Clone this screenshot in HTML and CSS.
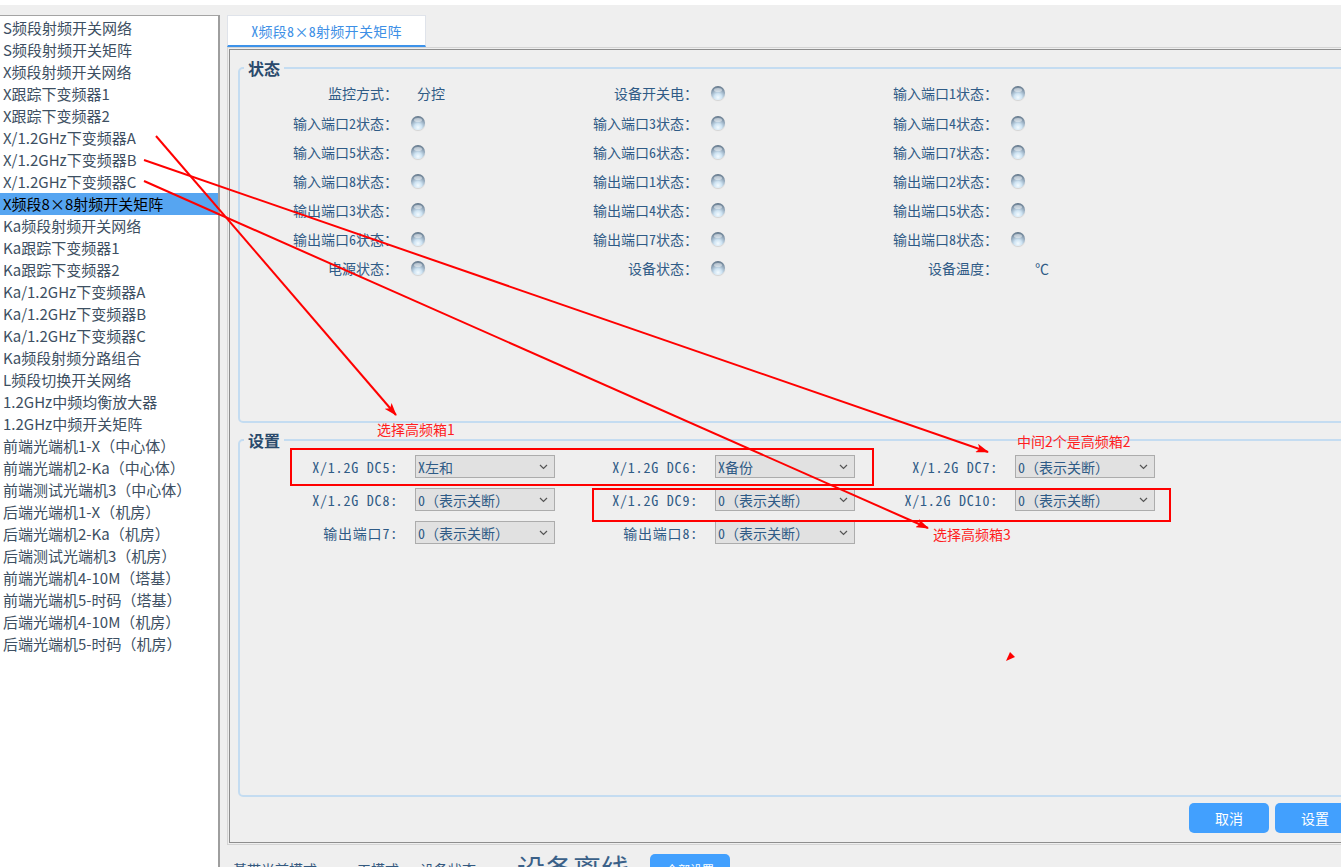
FILE: index.html
```html
<!DOCTYPE html>
<html lang="zh-CN">
<head>
<meta charset="utf-8">
<title>X频段8×8射频开关矩阵</title>
<link rel="stylesheet" href="styles.css">
</head>
<body>
<div class="topstrip"></div>
<div class="app">
  <aside class="sidebar">
    <div class="nav-item">S频段射频开关网络</div>
    <div class="nav-item">S频段射频开关矩阵</div>
    <div class="nav-item">X频段射频开关网络</div>
    <div class="nav-item">X跟踪下变频器1</div>
    <div class="nav-item">X跟踪下变频器2</div>
    <div class="nav-item">X/1.2GHz下变频器A</div>
    <div class="nav-item">X/1.2GHz下变频器B</div>
    <div class="nav-item">X/1.2GHz下变频器C</div>
    <div class="nav-item active">X频段8×8射频开关矩阵</div>
    <div class="nav-item">Ka频段射频开关网络</div>
    <div class="nav-item">Ka跟踪下变频器1</div>
    <div class="nav-item">Ka跟踪下变频器2</div>
    <div class="nav-item">Ka/1.2GHz下变频器A</div>
    <div class="nav-item">Ka/1.2GHz下变频器B</div>
    <div class="nav-item">Ka/1.2GHz下变频器C</div>
    <div class="nav-item">Ka频段射频分路组合</div>
    <div class="nav-item">L频段切换开关网络</div>
    <div class="nav-item">1.2GHz中频均衡放大器</div>
    <div class="nav-item">1.2GHz中频开关矩阵</div>
    <div class="nav-item">前端光端机1-X（中心体）</div>
    <div class="nav-item">前端光端机2-Ka（中心体）</div>
    <div class="nav-item">前端测试光端机3（中心体）</div>
    <div class="nav-item">后端光端机1-X（机房）</div>
    <div class="nav-item">后端光端机2-Ka（机房）</div>
    <div class="nav-item">后端测试光端机3（机房）</div>
    <div class="nav-item">前端光端机4-10M（塔基）</div>
    <div class="nav-item">前端光端机5-时码（塔基）</div>
    <div class="nav-item">后端光端机4-10M（机房）</div>
    <div class="nav-item">后端光端机5-时码（机房）</div>
  </aside>

  <main class="main">
    <div class="tabs">
      <div class="tab active">X频段8×8射频开关矩阵</div>
    </div>
    <div class="frame">
      <div class="panel">
        <fieldset class="group status">
          <legend>状态</legend>
          <div class="grid status-grid">
            <div class="cell"><span class="lbl">监控方式：</span><span class="val text">分控</span></div>
            <div class="cell"><span class="lbl">设备开关电：</span><span class="val"><i class="led"></i></span></div>
            <div class="cell"><span class="lbl">输入端口1状态：</span><span class="val"><i class="led"></i></span></div>

            <div class="cell"><span class="lbl">输入端口2状态：</span><span class="val"><i class="led"></i></span></div>
            <div class="cell"><span class="lbl">输入端口3状态：</span><span class="val"><i class="led"></i></span></div>
            <div class="cell"><span class="lbl">输入端口4状态：</span><span class="val"><i class="led"></i></span></div>

            <div class="cell"><span class="lbl">输入端口5状态：</span><span class="val"><i class="led"></i></span></div>
            <div class="cell"><span class="lbl">输入端口6状态：</span><span class="val"><i class="led"></i></span></div>
            <div class="cell"><span class="lbl">输入端口7状态：</span><span class="val"><i class="led"></i></span></div>

            <div class="cell"><span class="lbl">输入端口8状态：</span><span class="val"><i class="led"></i></span></div>
            <div class="cell"><span class="lbl">输出端口1状态：</span><span class="val"><i class="led"></i></span></div>
            <div class="cell"><span class="lbl">输出端口2状态：</span><span class="val"><i class="led"></i></span></div>

            <div class="cell"><span class="lbl">输出端口3状态：</span><span class="val"><i class="led"></i></span></div>
            <div class="cell"><span class="lbl">输出端口4状态：</span><span class="val"><i class="led"></i></span></div>
            <div class="cell"><span class="lbl">输出端口5状态：</span><span class="val"><i class="led"></i></span></div>

            <div class="cell"><span class="lbl">输出端口6状态：</span><span class="val"><i class="led"></i></span></div>
            <div class="cell"><span class="lbl">输出端口7状态：</span><span class="val"><i class="led"></i></span></div>
            <div class="cell"><span class="lbl">输出端口8状态：</span><span class="val"><i class="led"></i></span></div>

            <div class="cell"><span class="lbl">电源状态：</span><span class="val"><i class="led"></i></span></div>
            <div class="cell"><span class="lbl">设备状态：</span><span class="val"><i class="led"></i></span></div>
            <div class="cell"><span class="lbl">设备温度：</span><span class="val unit">℃</span></div>
          </div>
        </fieldset>

        <fieldset class="group settings">
          <legend>设置</legend>
          <div class="grid settings-grid">
            <div class="cell"><span class="lbl">X/1.2G DC5:</span><span class="val"><span class="combo"><span class="combo-text">X左和</span><svg class="chev" width="9" height="6" viewBox="0 0 9 6"><polyline points="1,1 4.5,4.5 8,1" fill="none" stroke="#555" stroke-width="1.2"/></svg></span></span></div>
            <div class="cell"><span class="lbl">X/1.2G DC6:</span><span class="val"><span class="combo"><span class="combo-text">X备份</span><svg class="chev" width="9" height="6" viewBox="0 0 9 6"><polyline points="1,1 4.5,4.5 8,1" fill="none" stroke="#555" stroke-width="1.2"/></svg></span></span></div>
            <div class="cell"><span class="lbl">X/1.2G DC7:</span><span class="val"><span class="combo"><span class="combo-text">0（表示关断）</span><svg class="chev" width="9" height="6" viewBox="0 0 9 6"><polyline points="1,1 4.5,4.5 8,1" fill="none" stroke="#555" stroke-width="1.2"/></svg></span></span></div>

            <div class="cell"><span class="lbl">X/1.2G DC8:</span><span class="val"><span class="combo"><span class="combo-text">0（表示关断）</span><svg class="chev" width="9" height="6" viewBox="0 0 9 6"><polyline points="1,1 4.5,4.5 8,1" fill="none" stroke="#555" stroke-width="1.2"/></svg></span></span></div>
            <div class="cell"><span class="lbl">X/1.2G DC9:</span><span class="val"><span class="combo"><span class="combo-text">0（表示关断）</span><svg class="chev" width="9" height="6" viewBox="0 0 9 6"><polyline points="1,1 4.5,4.5 8,1" fill="none" stroke="#555" stroke-width="1.2"/></svg></span></span></div>
            <div class="cell"><span class="lbl">X/1.2G DC10:</span><span class="val"><span class="combo"><span class="combo-text">0（表示关断）</span><svg class="chev" width="9" height="6" viewBox="0 0 9 6"><polyline points="1,1 4.5,4.5 8,1" fill="none" stroke="#555" stroke-width="1.2"/></svg></span></span></div>

            <div class="cell"><span class="lbl">输出端口7:</span><span class="val"><span class="combo"><span class="combo-text">0（表示关断）</span><svg class="chev" width="9" height="6" viewBox="0 0 9 6"><polyline points="1,1 4.5,4.5 8,1" fill="none" stroke="#555" stroke-width="1.2"/></svg></span></span></div>
            <div class="cell"><span class="lbl">输出端口8:</span><span class="val"><span class="combo"><span class="combo-text">0（表示关断）</span><svg class="chev" width="9" height="6" viewBox="0 0 9 6"><polyline points="1,1 4.5,4.5 8,1" fill="none" stroke="#555" stroke-width="1.2"/></svg></span></span></div>
          </div>
        </fieldset>

        <div class="actions">
          <button class="btn">取消</button>
          <button class="btn">设置</button>
        </div>
      </div>
    </div>

    <div class="statusbar">
      <span class="sb-text">基带光前模式</span>
      <span class="sb-text sb-mode">工模式</span>
      <span class="sb-text sb-state">设备状态</span>
      <span class="sb-big">设备离线</span>
      <button class="sb-btn">全部设置</button>
    </div>
  </main>
</div>

<div class="annot">
  <svg class="annot-svg" width="1341" height="867" viewBox="0 0 1341 867">
    <defs>
      <marker id="ah" markerWidth="13" markerHeight="9" refX="12" refY="4.5" orient="auto" markerUnits="userSpaceOnUse">
        <path d="M0,0 L13,4.5 L0,9 L3,4.5 z" fill="#ff0000"/>
      </marker>
    </defs>
    <g stroke="#ff0000" stroke-width="2" fill="none">
      <line x1="156" y1="136" x2="396" y2="415" marker-end="url(#ah)"/>
      <line x1="144" y1="160" x2="988" y2="452" marker-end="url(#ah)"/>
      <line x1="144" y1="181" x2="928" y2="528" marker-end="url(#ah)"/>
      <rect x="291" y="449" width="582" height="36"/>
      <rect x="593" y="489" width="577" height="32"/>
    </g>
    <path d="M1006,661 L1010,652 L1015,657 Z" fill="#ff0000"/>
  </svg>
  <span class="note note1">选择高频箱1</span>
  <span class="note note2">中间2个是高频箱2</span>
  <span class="note note3">选择高频箱3</span>
</div>
</body>
</html>
```

FILE: styles.css
```css
html, body {
  margin: 0;
  padding: 0;
  overflow: hidden;
}
body {
  position: relative;
  width: 1341px;
  height: 867px;
  background: #efefef;
  font-family: "Noto Sans CJK SC", "Liberation Sans", sans-serif;
}

.topstrip {
  height: 5px;
  background: #ffffff;
}

.app {
  display: flex;
  margin-top: 10px;
  width: 1366px;
  height: 852px;
}

/* ---------- sidebar ---------- */
.sidebar {
  flex: none;
  width: 218px;
  background: #ffffff;
  border-top: 1px solid #a4a4a4;
  border-right: 2px solid #9e9e9e;
  padding-top: 1px;
}
.nav-item {
  height: 22px;
  line-height: 22px;
  padding-left: 3px;
  font-size: 15px;
  color: #3d4f62;
  white-space: nowrap;
}
.nav-item.active {
  background: #56a5f1;
  color: #000000;
}

/* ---------- main ---------- */
.main {
  flex: 1;
  min-width: 0;
  padding-left: 7px;
  display: flex;
  flex-direction: column;
}
.tabs {
  display: flex;
  height: 32px;
}
.tab {
  box-sizing: border-box;
  width: 199px;
  height: 32px;
  background: #ffffff;
  border: 1px solid #dfe3ea;
  border-bottom: 2px solid #3e93ea;
  color: #3d8fe6;
  font-family: "Noto Sans Mono CJK SC", "Noto Sans CJK SC", monospace;
  font-size: 14px;
  letter-spacing: 0.3px;
  display: flex;
  align-items: center;
  justify-content: center;
}

.frame {
  border: 1px solid #d4d4d4;
  padding: 1px;
}
.panel {
  border: 1px solid #8d8d8d;
  padding: 9px 8px 9px 8px;
  background: #efefef;
}

.group {
  box-sizing: border-box;
  margin: 0;
  padding: 0;
  min-width: 0;
  border: 2px solid #c4dcf1;
  border-radius: 5px;
}
.group legend {
  margin-left: 4px;
  padding: 0 4px;
  font-family: "Noto Sans Mono CJK SC", "Noto Sans CJK SC", monospace;
  font-size: 16px;
  line-height: 18px;
  font-weight: bold;
  color: #2a4a6c;
}
.group.status {
  height: 364px;
}
.group.settings {
  margin-top: 8px;
  height: 366px;
}

.grid {
  display: grid;
  grid-template-columns: repeat(3, 300px);
  font-family: "Noto Sans Mono CJK SC", "Noto Sans CJK SC", monospace;
  font-size: 14px;
  color: #2f5b86;
}
.status-grid {
  grid-template-rows: 30px repeat(6, 29px);
  padding-top: 1px;
}
.settings-grid {
  grid-auto-rows: 33px;
  padding-top: 1px;
}
.settings-grid .lbl {
  letter-spacing: 0.8px;
}
.cell {
  display: flex;
  align-items: center;
}
.lbl {
  flex: none;
  width: 158px;
  text-align: right;
  white-space: nowrap;
}
.val {
  flex: none;
  margin-left: 13px;
  display: flex;
  align-items: center;
}
.val.text {
  padding-left: 6px;
}
.val.unit {
  padding-left: 24px;
}

/* LED indicator */
.led {
  position: relative;
  display: block;
  width: 14px;
  height: 14px;
  border-radius: 50%;
  background: radial-gradient(circle at 50% 82%, #f4fbff 0%, #cfe4f3 28%, #93a8bb 58%, #667a8d 82%, #56687b 100%);
  box-shadow: 0 1px 1px rgba(0, 0, 0, 0.12);
}
.led::before {
  content: "";
  position: absolute;
  left: 3px;
  top: 2px;
  width: 8px;
  height: 4px;
  border-radius: 50%;
  background: rgba(255, 255, 255, 0.45);
}

/* combo box */
.combo {
  box-sizing: border-box;
  margin-left: 4px;
  width: 140px;
  height: 23px;
  border: 1px solid #acacac;
  background: #e1e1e1;
  display: flex;
  align-items: center;
  justify-content: space-between;
  padding: 0 6px 0 2px;
  color: #2f5b86;
}
.combo-text {
  white-space: nowrap;
}
.chev {
  display: block;
}

/* buttons */
.actions {
  display: flex;
  justify-content: flex-end;
  gap: 6px;
  margin-top: 6px;
}
.btn {
  width: 80px;
  height: 30px;
  border: 0;
  border-radius: 5px;
  background: #42a0fe;
  color: #ffffff;
  font-family: "Noto Sans Mono CJK SC", "Noto Sans CJK SC", monospace;
  font-size: 14px;
  padding: 0;
}

/* bottom status bar (partially visible) */
.statusbar {
  display: flex;
  align-items: flex-start;
  margin-top: 9px;
  padding-left: 6px;
  color: #34597f;
}
.sb-text {
  margin-top: 5px;
  font-size: 14px;
  line-height: 20px;
  white-space: nowrap;
}
.sb-mode {
  margin-left: 40px;
}
.sb-state {
  margin-left: 21px;
}
.sb-big {
  margin-left: 41px;
  margin-top: -3px;
  font-size: 28px;
  line-height: 34px;
  white-space: nowrap;
  color: #3a6088;
}
.sb-btn {
  margin-left: 21px;
  width: 80px;
  height: 30px;
  border: 0;
  border-radius: 5px;
  background: #42a0fe;
  color: #ffffff;
  font-size: 12px;
  padding: 0;
}

/* red annotations drawn over the screenshot */
.annot {
  position: absolute;
  left: 0;
  top: 0;
  width: 1341px;
  height: 867px;
  pointer-events: none;
}
.annot-svg {
  position: absolute;
  left: 0;
  top: 0;
}
.note {
  position: absolute;
  font-family: "Noto Sans CJK SC", "Liberation Sans", sans-serif;
  font-size: 14px;
  line-height: 16px;
  color: #ff1e1e;
  white-space: nowrap;
}
.note1 { left: 377px; top: 421px; }
.note2 { left: 1017px; top: 433px; }
.note3 { left: 933px; top: 526px; }
```
